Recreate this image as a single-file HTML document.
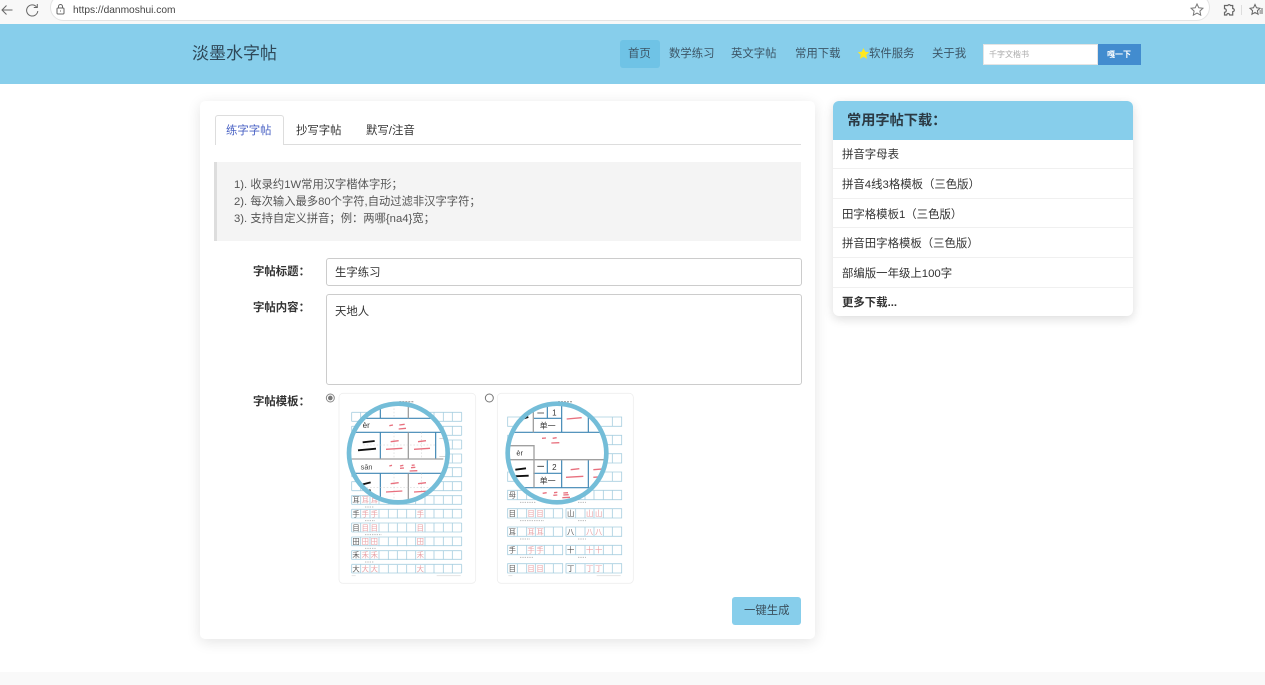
<!DOCTYPE html>
<html lang="zh"><head><meta charset="utf-8"><title>淡墨水字帖</title>
<style>
html,body{margin:0;padding:0;width:1265px;height:685px;overflow:hidden;background:#fff}
body{position:relative;font-family:"Liberation Sans","Noto Sans CJK SC",sans-serif;color:#333;font-size:11.4px}
div,span,svg{position:absolute;box-sizing:border-box}
.t{white-space:nowrap;line-height:14px;height:14px;filter:blur(.25px)}
.b{font-weight:bold}
.sep{left:833px;width:300px;height:1px;background:#f0f0f0}
svg text{font-family:"Liberation Sans","Noto Sans CJK SC",sans-serif}
.tpl{filter:blur(.35px)}
</style></head><body>
<!-- browser bar -->
<div style="left:0;top:0;width:1265px;height:24px;background:#f8f8f8"></div>
<div style="left:50px;top:-6px;width:1160px;height:27px;background:#fff;border:1px solid #e4e4e4;border-radius:14px"></div>
<svg style="left:0;top:0" width="1265" height="24" fill="none" stroke="#666" stroke-width="1">
<path d="M12.500 10H2M6.500 5.500L2 10L6.500 14.500"/>
<path d="M36.500 6.800A5.600 5.600 0 1 0 37.800 11M37.300 4V7.500H33.800"/>
<rect x="57" y="8" width="7" height="6" rx="1"/><path d="M58.500 8V6.500a2 2 0 0 1 4 0V8M60.500 10.500v1"/>
<path d="M1197 4l1.800 3.800 4.100.5-3 2.800.8 4.100-3.700-2.100-3.700 2.100.8-4.100-3-2.800 4.100-.5z" stroke="#777"/>
<path d="M1224.500 5.500h3.300a1.400 1.400 0 0 1 2.600 0h2.300v3a1.500 1.500 0 0 1 0 3.200v3.300h-3a1.500 1.500 0 0 0-3 0h-2.200v-2.700a1.800 1.800 0 0 0 0-3.600z" stroke-width="1.200"/>
<path d="M1241.500 5v10" stroke="#ddd"/>
<path d="M1255 4.500l1.500 3.300 3.500.5-2.600 2.400.7 3.500-3.100-1.800-3.100 1.800.7-3.500-2.600-2.400 3.500-.5zM1259.500 11h3.500M1259.500 13h3.500M1261 9h2"/>
</svg>
<span class="t" style="left:73px;top:4px;font-size:10.200px;color:#444">https://danmoshui.com</span>
<!-- header -->
<div style="left:0;top:24px;width:1265px;height:60px;background:#87ceeb"></div>
<span class="t" style="left:192px;top:44px;font-size:17px;height:20px;line-height:20px;color:#2f4858">淡墨水字帖</span>
<div style="left:620px;top:40px;width:40px;height:28px;background:#6fc3e6;border-radius:3px"></div>
<span class="t" style="left:628px;top:47px;color:#3c5566">首页</span>
<span class="t" style="left:669px;top:47px;color:#3c5566">数学练习</span>
<span class="t" style="left:731px;top:47px;color:#3c5566">英文字帖</span>
<span class="t" style="left:795px;top:47px;color:#3c5566">常用下载</span>
<svg style="left:857px;top:47px" width="13" height="13"><path d="M6.500 1l1.700 3.700 4 .5-3 2.700.8 4-3.500-2-3.500 2 .8-4-3-2.700 4-.5z" fill="#ffe820"/></svg>
<span class="t" style="left:869px;top:47px;color:#3c5566">软件服务</span>
<span class="t" style="left:932px;top:47px;color:#3c5566">关于我</span>
<div style="left:983px;top:44px;width:115px;height:21px;background:#fff;border:1px solid #e4e4e4"></div>
<span class="t" style="left:989px;top:48px;font-size:8px;color:#aaa">千字文楷书</span>
<div style="left:1098px;top:44px;width:43px;height:21px;background:#428ccf"></div>
<span class="t" style="left:1107px;top:48px;font-size:8px;color:#fff;font-weight:bold">嘎一下</span>
<!-- main card -->
<div style="left:200px;top:101px;width:615px;height:538px;background:#fff;border-radius:5px;box-shadow:0 3px 14px rgba(0,0,0,.11)"></div>
<div style="left:215px;top:144px;width:586px;height:1px;background:#ddd"></div>
<div style="left:215px;top:115px;width:69px;height:30px;background:#fff;border:1px solid #ddd;border-bottom:0;border-radius:3px 3px 0 0"></div>
<span class="t" style="left:226px;top:124px;color:#4a62c4">练字字帖</span>
<span class="t" style="left:296px;top:124px">抄写字帖</span>
<span class="t" style="left:366px;top:124px">默写/注音</span>
<div style="left:214px;top:162px;width:587px;height:79px;background:#f4f4f4;border-left:3px solid #ddd"></div>
<span class="t" style="left:234px;top:178px;color:#555;font-size:11.300px">1). 收录约1W常用汉字楷体字形；</span>
<span class="t" style="left:234px;top:195px;color:#555;font-size:11.300px">2). 每次输入最多80个字符,自动过滤非汉字字符；</span>
<span class="t" style="left:234px;top:212px;color:#555;font-size:11.300px">3). 支持自定义拼音；例：两哪{na4}宽；</span>
<span class="t b" style="left:253px;top:265px">字帖标题：</span>
<div style="left:326px;top:258px;width:476px;height:28px;border:1px solid #ccc;border-radius:3px"></div>
<span class="t" style="left:335px;top:266px">生字练习</span>
<span class="t b" style="left:253px;top:301px">字帖内容：</span>
<div style="left:326px;top:294px;width:476px;height:91px;border:1px solid #ccc;border-radius:3px"></div>
<span class="t" style="left:335px;top:305px">天地人</span>
<span class="t b" style="left:253px;top:395px">字帖模板：</span>
<!-- template 1 -->
<svg class="tpl" style="left:320px;top:385px" width="160" height="205" viewBox="0 0 480 615">
<defs>
<clipPath id="c1"><circle cx="235" cy="204" r="148"/></clipPath>
</defs>
<circle cx="31" cy="39" r="12" fill="#fff" stroke="#888" stroke-width="3"/><circle cx="31" cy="39" r="7" fill="#777"/>
<rect x="57" y="25" width="410" height="570" rx="12" fill="#fff" stroke="#eee" stroke-width="2.500"/>
<path d="M238 50h44" stroke="#aaa" stroke-width="4" stroke-dasharray="6 3"/>
<g fill="none" stroke="#a9cfe0" stroke-width="2.500">
<path d="M95 82h330M95 109h330M95 124h330M95 151h330M95 165h330M95 192h330M95 207h330M95 234h330M95 248h330M95 275h330M95 290h330M95 317h330M95 332h330M95 358h330M95 373h330M95 399h330M95 414h330M95 441h330M95 456h330M95 482h330M95 497h330M95 523h330M95 538h330M95 564h330"/>
<path d="M95 82V564M122 82V564M150 332V564M177 332V564M205 332V564M232 332V564M260 332V564M287 332V564M315 332V564M342 82V564M370 82V564M397 82V564M425 82V564" stroke-dasharray="27 14.500"/>
</g>
<path d="M135 366h28M135 407h30M135 449h50M135 490h34M135 531h28M135 320h28" stroke="#bbb" stroke-width="3" stroke-dasharray="4 3"/>
<path d="M350 572h72M95 572h12" stroke="#e4e4e4" stroke-width="3"/>
<g font-size="22" fill="#e9a0a4" text-anchor="middle">
<text x="136" y="353">耳</text><text x="163" y="353">耳</text>
<text x="136" y="394">手</text><text x="163" y="394">手</text><text x="301" y="394">手</text>
<text x="136" y="436">目</text><text x="163" y="436">目</text><text x="301" y="436">目</text>
<text x="136" y="477">田</text><text x="163" y="477">田</text><text x="301" y="477">田</text>
<text x="136" y="518">禾</text><text x="163" y="518">禾</text><text x="301" y="518">禾</text>
<text x="136" y="559">大</text><text x="163" y="559">大</text><text x="301" y="559">大</text>
</g>
<g font-size="22" fill="#555" text-anchor="middle"><text x="108" y="353">耳</text><text x="108" y="394">手</text><text x="108" y="436">目</text><text x="108" y="477">田</text><text x="108" y="518">禾</text><text x="108" y="559">大</text></g>
<g clip-path="url(#c1)">
<rect x="80" y="50" width="310" height="310" fill="#fff"/>
<g fill="none" stroke="#3f86b4" stroke-width="3.500">
<path d="M181 50V100M181 142V222M181 265V360M95 100H370M95 142H370M95 265H370M347 142V222"/>
</g>
<g fill="none" stroke="#a0a0a0" stroke-width="4"><path d="M265 50V100M265 142V222M265 265V360M95 222H370"/><path d="M358 160H385V215H358" stroke="#bbb" stroke-width="2"/></g>
<path d="M222 50V100M222 142V222M305 142V222M130 180H345M222 265V350M305 265V350M130 308H345" stroke="#ccc" stroke-width="1.500" stroke-dasharray="5 5" fill="none"/>
<text x="128" y="129" font-size="24" fill="#333">èr</text>
<text x="122" y="254" font-size="22" fill="#444">sān</text>
<path d="M128 172L164 168M114 196L168 191M128 298L152 292M124 319L152 316M125 345L168 340" stroke="#111" stroke-width="5.500" fill="none"/>
<path d="M208 122L219 120M238 120L254 118M236 132L258 130M208 243L216 241M240 243L250 241M240 250L252 249M275 241L284 240M273 248L286 247M269 258L292 257M212 170L236 167M198 193L247 190M294 170L318 167M282 193L330 190M212 296L236 293M198 321L247 318M294 296L318 293M282 321L330 318" stroke="#e8707e" stroke-width="4" fill="none"/>
</g>
<circle cx="235" cy="204" r="148" fill="none" stroke="#74bdd8" stroke-width="14"/>
</svg>
<!-- template 2 -->
<svg class="tpl" style="left:480px;top:385px" width="160" height="205" viewBox="0 0 480 615">
<defs><clipPath id="c2"><circle cx="231" cy="204" r="148"/></clipPath></defs>
<circle cx="28" cy="39" r="12" fill="#fff" stroke="#777" stroke-width="3"/>
<rect x="52" y="25" width="408" height="570" rx="12" fill="#fff" stroke="#eee" stroke-width="2.500"/>
<path d="M234 50h44" stroke="#aaa" stroke-width="4" stroke-dasharray="6 3"/>
<g fill="none" stroke="#a9cfe0" stroke-width="2.500">
<path d="M83 96h165v28H83zM83 151h165v28H83zM83 206h165v28H83zM83 261h165v28H83zM83 316h165v28H83zM83 371h165v28H83zM83 426h165v28H83zM83 481h165v28H83zM83 536h165v28H83z"/>
<path d="M258 96h167v28H258zM258 151h167v28H258zM258 206h167v28H258zM258 261h167v28H258zM258 316h167v28H258zM258 371h167v28H258zM258 426h167v28H258zM258 481h167v28H258zM258 536h167v28H258z"/>
<path d="M112 316v248M140 316v248M166 316v248M193 316v248M220 316v248M287 316v248M315 316v248M342 316v248M370 316v248M397 96v468" stroke-dasharray="28 27"/>
</g>
<path d="M120 352h48M120 407h72M120 462h30M120 517h42M294 352h24M294 407h24M294 462h24M294 517h24" stroke="#bbb" stroke-width="3" stroke-dasharray="4 3"/>
<path d="M350 572h72M85 572h12" stroke="#e4e4e4" stroke-width="3"/>
<g font-size="22" text-anchor="middle" fill="#555">
<text x="97" y="338">母</text><text x="97" y="393">目</text><text x="97" y="448">耳</text><text x="97" y="503">手</text><text x="97" y="558">目</text>
<text x="272" y="393">山</text><text x="272" y="448">八</text><text x="272" y="503">十</text><text x="272" y="558">丁</text>
</g>
<g font-size="22" text-anchor="middle" fill="#e9a0a4">
<text x="153" y="393">目</text><text x="180" y="393">目</text><text x="153" y="448">耳</text><text x="180" y="448">耳</text><text x="153" y="503">手</text><text x="180" y="503">手</text><text x="153" y="558">目</text><text x="180" y="558">目</text>
<text x="329" y="393">山</text><text x="356" y="393">山</text><text x="329" y="448">八</text><text x="356" y="448">八</text><text x="329" y="503">十</text><text x="356" y="503">十</text><text x="329" y="558">丁</text><text x="356" y="558">丁</text>
</g>
<g clip-path="url(#c2)">
<rect x="75" y="50" width="312" height="310" fill="#fff"/>
<g fill="none" stroke="#3f86b4" stroke-width="3.500">
<path d="M80 142H390M160 100H245M160 265H245M80 308H390M202 60V100M202 225V265M245 60V142M245 225V308M325 60V142M325 225V308"/>
</g>
<path d="M160 60V142M90 182H162V225M162 225V308M80 224H390" fill="none" stroke="#a0a0a0" stroke-width="4"/>
<text x="223" y="91" font-size="24" fill="#333" text-anchor="middle">1</text>
<text x="223" y="255" font-size="24" fill="#333" text-anchor="middle">2</text>
<text x="203" y="131" font-size="24" fill="#333" text-anchor="middle">单一</text>
<text x="203" y="296" font-size="24" fill="#333" text-anchor="middle">单一</text>
<text x="119" y="211" font-size="22" fill="#333" text-anchor="middle">èr</text>
<path d="M172 84H192M172 244H192" stroke="#333" stroke-width="2.500"/>
<path d="M106 254L138 250M102 274L146 272M132 100L145 96" stroke="#111" stroke-width="5.500" fill="none"/>
<path d="M186 160L198 159M218 160L230 158M214 174L238 173M260 102L305 98M272 254L298 251M258 277L310 274M340 254L380 251M340 277L385 274M188 325L200 323M222 323L232 322M220 331L232 330M250 324L264 323M250 330L266 329M247 338L270 337" stroke="#e8707e" stroke-width="4" fill="none"/>
</g>
<circle cx="231" cy="204" r="148" fill="none" stroke="#74bdd8" stroke-width="14"/>
</svg>
<!-- generate button -->
<div style="left:732px;top:597px;width:69px;height:28px;background:#87ceeb;border-radius:3px"></div>
<span class="t" style="left:744px;top:604px;color:#3a4f5c">一键生成</span>
<!-- sidebar -->
<div style="left:833px;top:101px;width:300px;height:215px;background:#fff;border-radius:6px;box-shadow:0 3px 10px rgba(0,0,0,.14)"></div>
<div style="left:833px;top:101px;width:300px;height:39px;background:#87ceeb;border-radius:6px 6px 0 0"></div>
<span class="t b" style="left:847px;top:113px;font-size:14.200px;height:16px;line-height:16px;color:#2b3a44">常用字帖下载：</span>
<div class="sep" style="top:168px"></div><div class="sep" style="top:198px"></div><div class="sep" style="top:227px"></div><div class="sep" style="top:257px"></div><div class="sep" style="top:287px"></div>
<span class="t" style="left:842px;top:148px">拼音字母表</span>
<span class="t" style="left:842px;top:178px">拼音4线3格模板（三色版）</span>
<span class="t" style="left:842px;top:208px">田字格模板1（三色版）</span>
<span class="t" style="left:842px;top:237px">拼音田字格模板（三色版）</span>
<span class="t" style="left:842px;top:267px">部编版一年级上100字</span>
<span class="t b" style="left:842px;top:296px">更多下载...</span>
<!-- footer -->
<div style="left:0;top:672px;width:1265px;height:13px;background:#f9f9f9"></div>
</body></html>
